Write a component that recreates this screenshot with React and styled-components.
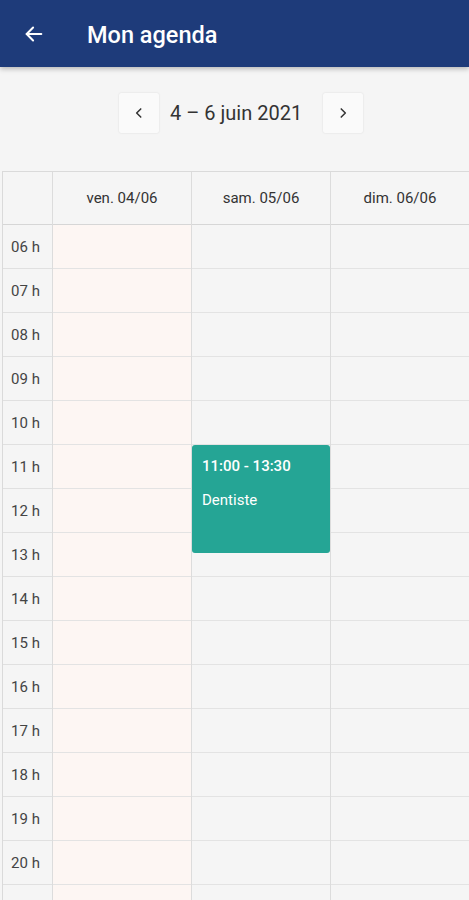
import styled, { createGlobalStyle } from "styled-components";

const GlobalStyle = createGlobalStyle`
  body {
    margin: 0;
    background: #f5f5f5;
    font-family: Roboto, "Noto Sans", Arial, sans-serif;
  }
`;

const HOURS = ["06", "07", "08", "09", "10", "11", "12", "13", "14", "15", "16", "17", "18", "19", "20", "21"];
const DAYS = [
  { label: "ven. 04/06", today: true },
  { label: "sam. 05/06", events: [{ start: 11, end: 13.5, time: "11:00 - 13:30", title: "Dentiste" }] },
  { label: "dim. 06/06" },
];
const ROW = 44;

const App = () => {
  return (
    <Page>
      <GlobalStyle />
      <AppBar>
        <BackButton>
          <svg width="22" height="22" viewBox="0 0 24 24" fill="none" stroke="#fff" strokeWidth="2.2" strokeLinecap="round" strokeLinejoin="round">
            <path d="M20 12H4" />
            <path d="M11 5l-7 7 7 7" />
          </svg>
        </BackButton>
        <Title>Mon agenda</Title>
      </AppBar>

      <Nav>
        <NavButton>
          <svg width="14" height="14" viewBox="0 0 24 24" fill="none" stroke="#333" strokeWidth="2.6" strokeLinecap="round" strokeLinejoin="round">
            <path d="M15 5l-7 7 7 7" />
          </svg>
        </NavButton>
        <Range>4 – 6 juin 2021</Range>
        <NavButton>
          <svg width="14" height="14" viewBox="0 0 24 24" fill="none" stroke="#333" strokeWidth="2.6" strokeLinecap="round" strokeLinejoin="round">
            <path d="M9 5l7 7-7 7" />
          </svg>
        </NavButton>
      </Nav>

      <Calendar>
        <TimeCol>
          <HeadCell />
          {HOURS.map((h) => (
            <HourCell key={h}>{h} h</HourCell>
          ))}
        </TimeCol>
        {DAYS.map((day) => (
          <DayCol key={day.label}>
            <HeadCell>{day.label}</HeadCell>
            <Slots $today={day.today}>
              {HOURS.map((h) => (
                <Slot key={h} />
              ))}
              {day.events?.map((ev) => (
                <Event
                  key={ev.title}
                  style={{ top: (ev.start - 6) * ROW, height: (ev.end - ev.start) * ROW - 2 }}
                >
                  <EventTime>{ev.time}</EventTime>
                  <EventTitle>{ev.title}</EventTitle>
                </Event>
              ))}
            </Slots>
          </DayCol>
        ))}
      </Calendar>
    </Page>
  );
};

export default App;

const Page = styled.div`
  width: 469px;
  height: 900px;
  overflow: hidden;
  background: #f5f5f5;
`;

const AppBar = styled.header`
  height: 67px;
  background: #1e3b7a;
  display: flex;
  align-items: center;
  box-shadow: 0 2px 5px rgba(0, 0, 0, 0.25);
  position: relative;
  z-index: 1;
`;

const BackButton = styled.div`
  width: 22px;
  height: 22px;
  margin-left: 23px;
  display: flex;
`;

const Title = styled.h1`
  margin: 2px 0 0 42px;
  color: #fff;
  font-size: 23.5px;
  font-weight: 500;
`;

const Nav = styled.div`
  display: flex;
  align-items: center;
  padding: 26px 0 0 119px;
  height: 40px;
`;

const NavButton = styled.div`
  width: 40px;
  height: 40px;
  background: #fafafa;
  border-radius: 2px;
  box-shadow: 0 0 2px rgba(0, 0, 0, 0.12);
  display: flex;
  align-items: center;
  justify-content: center;
`;

const Range = styled.div`
  width: 164px;
  padding-left: 11px;
  box-sizing: border-box;
  font-size: 20px;
  color: #333;
`;

const Calendar = styled.div`
  margin: 38px 0 0 2px;
  border-top: 1px solid #dadada;
  border-left: 1px solid #dadada;
  display: grid;
  grid-template-columns: 50px 139px 139px 139px;
`;

const TimeCol = styled.div`
  display: flex;
  flex-direction: column;
  border-right: 1px solid #dcdcdc;
`;

const DayCol = styled.div`
  display: flex;
  flex-direction: column;
  border-right: 1px solid #dcdcdc;
`;

const HeadCell = styled.div`
  height: 52px;
  border-bottom: 1px solid #d6d6d6;
  display: flex;
  align-items: center;
  justify-content: center;
  font-size: 15px;
  color: #333;
`;

const HourCell = styled.div`
  height: 43px;
  border-bottom: 1px solid #e0e0e0;
  display: flex;
  align-items: center;
  justify-content: center;
  padding-right: 4px;
  font-size: 15px;
  color: #444;
`;

const Slots = styled.div`
  position: relative;
  background: ${(p) => (p.$today ? "#fdf6f3" : "transparent")};
`;

const Slot = styled.div`
  height: 43px;
  border-bottom: 1px solid #e3e3e3;
`;

const Event = styled.div`
  position: absolute;
  left: 0;
  right: 0;
  background: #25a595;
  border-radius: 3px;
  padding: 12px 10px;
  box-sizing: border-box;
  color: #fff;
`;

const EventTime = styled.div`
  font-size: 15px;
  font-weight: 500;
`;

const EventTitle = styled.div`
  margin-top: 16px;
  font-size: 15px;
`;
